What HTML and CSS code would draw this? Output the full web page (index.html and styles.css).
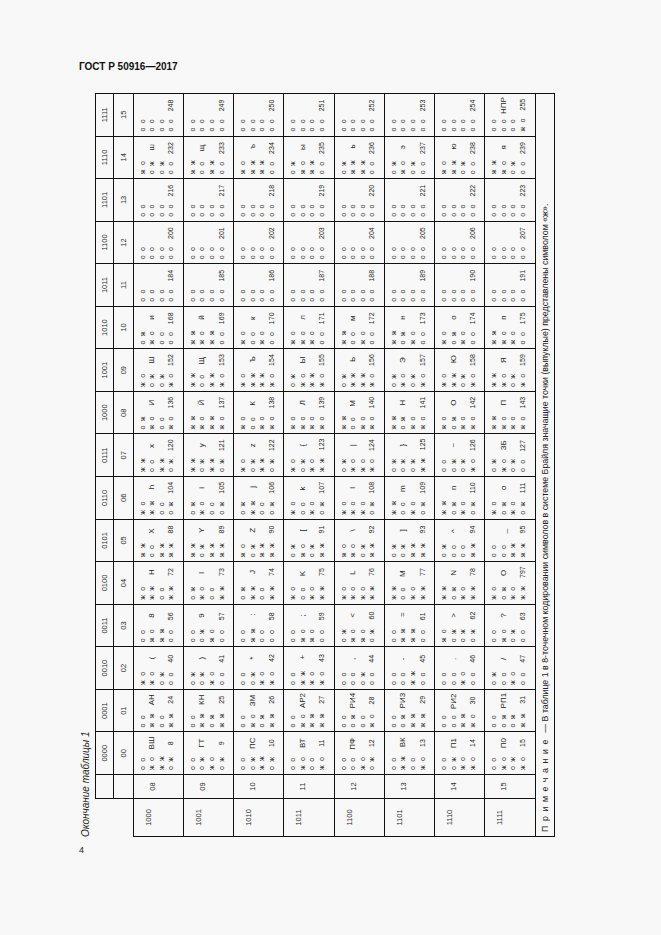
FILE: index.html
```html
<!DOCTYPE html>
<html lang="ru">
<head>
<meta charset="utf-8">
<title>ГОСТ Р 50916—2017</title>
<link rel="stylesheet" href="styles.css">
</head>
<body>
<div class="page">
<p class="doc-title">ГОСТ Р 50916—2017</p>
<div class="sheet">
<div class="turn">
<p class="caption">Окончание таблицы 1</p>
<table class="grid">
<colgroup><col class="w-a"><col class="w-b"><col class="w-c"><col class="w-c"><col class="w-c"><col class="w-c"><col class="w-c"><col class="w-c"><col class="w-c"><col class="w-c"><col class="w-c"><col class="w-c"><col class="w-c"><col class="w-c"><col class="w-c"><col class="w-c"><col class="w-c"><col class="w-c"></colgroup>
<tr class="h1"><td class="corner" rowspan="2"></td><td class="blank"></td><td>0000</td><td>0001</td><td>0010</td><td>0011</td><td>0100</td><td>0101</td><td>0110</td><td>0111</td><td>1000</td><td>1001</td><td>1010</td><td>1011</td><td>1100</td><td>1101</td><td>1110</td><td>1111</td></tr>
<tr class="h2"><td class="blank"></td><td>00</td><td>01</td><td>02</td><td>03</td><td>04</td><td>05</td><td>06</td><td>07</td><td>08</td><td>09</td><td>10</td><td>11</td><td>12</td><td>13</td><td>14</td><td>15</td></tr>

<tr class="row"><td class="lab-a">1000</td><td class="lab-b">08</td>
<td class="cell"><p>оо</p><p>жо<b>ВШ</b></p><p>жж</p><p>ож<b>8</b></p></td>
<td class="cell"><p>оо</p><p>жж<b>АН</b></p><p>оо</p><p>жж<b>24</b></p></td>
<td class="cell"><p>жо</p><p>жо<b>(</b></p><p>ож</p><p>оо<b>40</b></p></td>
<td class="cell"><p>оо</p><p>жо<b>8</b></p><p>жж</p><p>оо<b>56</b></p></td>
<td class="cell"><p>жо</p><p>жж<b>H</b></p><p>оо</p><p>жж<b>72</b></p></td>
<td class="cell"><p>жж</p><p>оо<b>X</b></p><p>жж</p><p>жж<b>88</b></p></td>
<td class="cell"><p>жо</p><p>жж<b>h</b></p><p>оо</p><p>ож<b>104</b></p></td>
<td class="cell"><p>жж</p><p>оо<b>x</b></p><p>жж</p><p>ож<b>120</b></p></td>
<td class="cell"><p>ож</p><p>жо<b>И</b></p><p>оо</p><p>жо<b>136</b></p></td>
<td class="cell"><p>жо</p><p>ож<b>Ш</b></p><p>ож</p><p>жо<b>152</b></p></td>
<td class="cell"><p>ож</p><p>жо<b>и</b></p><p>оо</p><p>оо<b>168</b></p></td>
<td class="cell"><p>оо</p><p>оо</p><p>оо</p><p>оо<b>184</b></p></td>
<td class="cell"><p>оо</p><p>оо</p><p>оо</p><p>оо<b>200</b></p></td>
<td class="cell"><p>оо</p><p>оо</p><p>оо</p><p>оо<b>216</b></p></td>
<td class="cell"><p>жо</p><p>ож<b>ш</b></p><p>ож</p><p>оо<b>232</b></p></td>
<td class="cell"><p>оо</p><p>оо</p><p>оо</p><p>оо<b>248</b></p></td>
</tr>

<tr class="row"><td class="lab-a">1001</td><td class="lab-b">09</td>
<td class="cell"><p>оо</p><p>ож<b>ГТ</b></p><p>жо</p><p>ож<b>9</b></p></td>
<td class="cell"><p>оо</p><p>жж<b>КН</b></p><p>ож</p><p>жж<b>25</b></p></td>
<td class="cell"><p>ож</p><p>ож<b>)</b></p><p>жо</p><p>оо<b>41</b></p></td>
<td class="cell"><p>оо</p><p>ож<b>9</b></p><p>жо</p><p>оо<b>57</b></p></td>
<td class="cell"><p>ож</p><p>жо<b>I</b></p><p>оо</p><p>жж<b>73</b></p></td>
<td class="cell"><p>жж</p><p>ож<b>Y</b></p><p>жж</p><p>жж<b>89</b></p></td>
<td class="cell"><p>ож</p><p>жо<b>i</b></p><p>оо</p><p>ож<b>105</b></p></td>
<td class="cell"><p>жж</p><p>ож<b>y</b></p><p>жж</p><p>ож<b>121</b></p></td>
<td class="cell"><p>жж</p><p>жо<b>Й</b></p><p>жж</p><p>жо<b>137</b></p></td>
<td class="cell"><p>жж</p><p>оо<b>Щ</b></p><p>жж</p><p>жо<b>153</b></p></td>
<td class="cell"><p>жж</p><p>жо<b>й</b></p><p>жж</p><p>оо<b>169</b></p></td>
<td class="cell"><p>оо</p><p>оо</p><p>оо</p><p>оо<b>185</b></p></td>
<td class="cell"><p>оо</p><p>оо</p><p>оо</p><p>оо<b>201</b></p></td>
<td class="cell"><p>оо</p><p>оо</p><p>оо</p><p>оо<b>217</b></p></td>
<td class="cell"><p>жж</p><p>оо<b>щ</b></p><p>жж</p><p>оо<b>233</b></p></td>
<td class="cell"><p>оо</p><p>оо</p><p>оо</p><p>оо<b>249</b></p></td>
</tr>

<tr class="row"><td class="lab-a">1010</td><td class="lab-b">10</td>
<td class="cell"><p>оо</p><p>ож<b>ПС</b></p><p>жж</p><p>ож<b>10</b></p></td>
<td class="cell"><p>оо</p><p>жо<b>ЗМ</b></p><p>ож</p><p>жж<b>26</b></p></td>
<td class="cell"><p>оо</p><p>ож<b>*</b></p><p>жо</p><p>жо<b>42</b></p></td>
<td class="cell"><p>оо</p><p>жж<b>:</b></p><p>оо</p><p>оо<b>58</b></p></td>
<td class="cell"><p>ож</p><p>жж<b>J</b></p><p>оо</p><p>жж<b>74</b></p></td>
<td class="cell"><p>жо</p><p>ож<b>Z</b></p><p>жж</p><p>жж<b>90</b></p></td>
<td class="cell"><p>ож</p><p>жж<b>j</b></p><p>оо</p><p>ож<b>106</b></p></td>
<td class="cell"><p>жо</p><p>ож<b>z</b></p><p>жж</p><p>ож<b>122</b></p></td>
<td class="cell"><p>жо</p><p>оо<b>К</b></p><p>жо</p><p>жо<b>138</b></p></td>
<td class="cell"><p>жо</p><p>жж<b>Ъ</b></p><p>жж</p><p>жо<b>154</b></p></td>
<td class="cell"><p>жо</p><p>оо<b>к</b></p><p>жо</p><p>оо<b>170</b></p></td>
<td class="cell"><p>оо</p><p>оо</p><p>оо</p><p>оо<b>186</b></p></td>
<td class="cell"><p>оо</p><p>оо</p><p>оо</p><p>оо<b>202</b></p></td>
<td class="cell"><p>оо</p><p>оо</p><p>оо</p><p>оо<b>218</b></p></td>
<td class="cell"><p>жо</p><p>жж<b>ъ</b></p><p>жж</p><p>оо<b>234</b></p></td>
<td class="cell"><p>оо</p><p>оо</p><p>оо</p><p>оо<b>250</b></p></td>
</tr>

<tr class="row"><td class="lab-a">1011</td><td class="lab-b">11</td>
<td class="cell"><p>оо</p><p>жо<b>ВТ</b></p><p>оо</p><p>жо<b>11</b></p></td>
<td class="cell"><p>оо</p><p>жо<b>АР2</b></p><p>жж</p><p>жж<b>27</b></p></td>
<td class="cell"><p>оо</p><p>жж<b>+</b></p><p>жо</p><p>жо<b>43</b></p></td>
<td class="cell"><p>оо</p><p>жо<b>;</b></p><p>жо</p><p>оо<b>59</b></p></td>
<td class="cell"><p>жо</p><p>оо<b>K</b></p><p>жо</p><p>жж<b>75</b></p></td>
<td class="cell"><p>ож</p><p>жо<b>[</b></p><p>ож</p><p>жж<b>91</b></p></td>
<td class="cell"><p>жо</p><p>оо<b>k</b></p><p>жо</p><p>ож<b>107</b></p></td>
<td class="cell"><p>жо</p><p>ож<b>{</b></p><p>жо</p><p>жж<b>123</b></p></td>
<td class="cell"><p>жо</p><p>жо<b>Л</b></p><p>жо</p><p>жо<b>139</b></p></td>
<td class="cell"><p>ож</p><p>жо<b>Ы</b></p><p>жж</p><p>жо<b>155</b></p></td>
<td class="cell"><p>жо</p><p>жо<b>л</b></p><p>жо</p><p>оо<b>171</b></p></td>
<td class="cell"><p>оо</p><p>оо</p><p>оо</p><p>оо<b>187</b></p></td>
<td class="cell"><p>оо</p><p>оо</p><p>оо</p><p>оо<b>203</b></p></td>
<td class="cell"><p>оо</p><p>оо</p><p>оо</p><p>оо<b>219</b></p></td>
<td class="cell"><p>ож</p><p>жо<b>ы</b></p><p>жж</p><p>оо<b>235</b></p></td>
<td class="cell"><p>оо</p><p>оо</p><p>оо</p><p>оо<b>251</b></p></td>
</tr>

<tr class="row"><td class="lab-a">1100</td><td class="lab-b">12</td>
<td class="cell"><p>оо</p><p>оо<b>ПФ</b></p><p>жо</p><p>ож<b>12</b></p></td>
<td class="cell"><p>оо</p><p>ож<b>РИ4</b></p><p>оо</p><p>жо<b>28</b></p></td>
<td class="cell"><p>оо</p><p>оо<b>,</b></p><p>ож</p><p>оо<b>44</b></p></td>
<td class="cell"><p>ож</p><p>жо<b>&lt;</b></p><p>жо</p><p>ож<b>60</b></p></td>
<td class="cell"><p>жо</p><p>жо<b>L</b></p><p>жо</p><p>жж<b>76</b></p></td>
<td class="cell"><p>жо</p><p>жо<b>\</b></p><p>ож</p><p>жж<b>92</b></p></td>
<td class="cell"><p>жо</p><p>жо<b>l</b></p><p>жо</p><p>ож<b>108</b></p></td>
<td class="cell"><p>ож</p><p>жо<b>|</b></p><p>жо</p><p>жо<b>124</b></p></td>
<td class="cell"><p>жж</p><p>оо<b>М</b></p><p>жо</p><p>жо<b>140</b></p></td>
<td class="cell"><p>ож</p><p>жж<b>Ь</b></p><p>жж</p><p>жо<b>156</b></p></td>
<td class="cell"><p>жж</p><p>оо<b>м</b></p><p>жо</p><p>оо<b>172</b></p></td>
<td class="cell"><p>оо</p><p>оо</p><p>оо</p><p>оо<b>188</b></p></td>
<td class="cell"><p>оо</p><p>оо</p><p>оо</p><p>оо<b>204</b></p></td>
<td class="cell"><p>оо</p><p>оо</p><p>оо</p><p>оо<b>220</b></p></td>
<td class="cell"><p>ож</p><p>жж<b>ь</b></p><p>жж</p><p>оо<b>236</b></p></td>
<td class="cell"><p>оо</p><p>оо</p><p>оо</p><p>оо<b>252</b></p></td>
</tr>

<tr class="row"><td class="lab-a">1101</td><td class="lab-b">13</td>
<td class="cell"><p>оо</p><p>жж<b>ВК</b></p><p>оо</p><p>жо<b>13</b></p></td>
<td class="cell"><p>оо</p><p>ож<b>РИ3</b></p><p>жж</p><p>жж<b>29</b></p></td>
<td class="cell"><p>оо</p><p>оо<b>-</b></p><p>жж</p><p>оо<b>45</b></p></td>
<td class="cell"><p>оо</p><p>жж<b>=</b></p><p>жж</p><p>оо<b>61</b></p></td>
<td class="cell"><p>жж</p><p>оо<b>M</b></p><p>жо</p><p>жж<b>77</b></p></td>
<td class="cell"><p>ож</p><p>ож<b>]</b></p><p>жж</p><p>жж<b>93</b></p></td>
<td class="cell"><p>жж</p><p>оо<b>m</b></p><p>жо</p><p>ож<b>109</b></p></td>
<td class="cell"><p>ож</p><p>ож<b>}</b></p><p>ож</p><p>жж<b>125</b></p></td>
<td class="cell"><p>жж</p><p>ож<b>Н</b></p><p>жо</p><p>жо<b>141</b></p></td>
<td class="cell"><p>ож</p><p>жо<b>Э</b></p><p>ож</p><p>жо<b>157</b></p></td>
<td class="cell"><p>жж</p><p>ож<b>н</b></p><p>жо</p><p>оо<b>173</b></p></td>
<td class="cell"><p>оо</p><p>оо</p><p>оо</p><p>оо<b>189</b></p></td>
<td class="cell"><p>оо</p><p>оо</p><p>оо</p><p>оо<b>205</b></p></td>
<td class="cell"><p>оо</p><p>оо</p><p>оо</p><p>оо<b>221</b></p></td>
<td class="cell"><p>ож</p><p>жо<b>э</b></p><p>ож</p><p>оо<b>237</b></p></td>
<td class="cell"><p>оо</p><p>оо</p><p>оо</p><p>оо<b>253</b></p></td>
</tr>

<tr class="row"><td class="lab-a">1110</td><td class="lab-b">14</td>
<td class="cell"><p>оо</p><p>ож<b>П1</b></p><p>жо</p><p>жо<b>14</b></p></td>
<td class="cell"><p>оо</p><p>оо<b>РИ2</b></p><p>жж</p><p>жо<b>30</b></p></td>
<td class="cell"><p>оо</p><p>оо<b>.</b></p><p>жо</p><p>оо<b>46</b></p></td>
<td class="cell"><p>жо</p><p>ож<b>&gt;</b></p><p>ож</p><p>ож<b>62</b></p></td>
<td class="cell"><p>жж</p><p>ож<b>N</b></p><p>жо</p><p>жж<b>78</b></p></td>
<td class="cell"><p>ож</p><p>оо<b>^</b></p><p>оо</p><p>жж<b>94</b></p></td>
<td class="cell"><p>жж</p><p>ож<b>n</b></p><p>жо</p><p>ож<b>110</b></p></td>
<td class="cell"><p>оо</p><p>ож<b>~</b></p><p>ож</p><p>жо<b>126</b></p></td>
<td class="cell"><p>жо</p><p>ож<b>О</b></p><p>жо</p><p>жо<b>142</b></p></td>
<td class="cell"><p>жо</p><p>жж<b>Ю</b></p><p>ож</p><p>жо<b>158</b></p></td>
<td class="cell"><p>жо</p><p>ож<b>о</b></p><p>жо</p><p>оо<b>174</b></p></td>
<td class="cell"><p>оо</p><p>оо</p><p>оо</p><p>оо<b>190</b></p></td>
<td class="cell"><p>оо</p><p>оо</p><p>оо</p><p>оо<b>206</b></p></td>
<td class="cell"><p>оо</p><p>оо</p><p>оо</p><p>оо<b>222</b></p></td>
<td class="cell"><p>жо</p><p>жж<b>ю</b></p><p>ож</p><p>оо<b>238</b></p></td>
<td class="cell"><p>оо</p><p>оо</p><p>оо</p><p>оо<b>254</b></p></td>
</tr>

<tr class="row"><td class="lab-a">1111</td><td class="lab-b">15</td>
<td class="cell"><p>оо</p><p>жо<b>П0</b></p><p>ож</p><p>жо<b>15</b></p></td>
<td class="cell"><p>оо</p><p>ож<b>РП1</b></p><p>ож</p><p>жж<b>31</b></p></td>
<td class="cell"><p>ож</p><p>оо<b>/</b></p><p>жо</p><p>оо<b>47</b></p></td>
<td class="cell"><p>оо</p><p>жо<b>?</b></p><p>ож</p><p>оо<b>63</b></p></td>
<td class="cell"><p>жо</p><p>ож<b>O</b></p><p>жо</p><p>жж<b>797</b></p></td>
<td class="cell"><p>оо</p><p>оо<b>_</b></p><p>жж</p><p>жж<b>95</b></p></td>
<td class="cell"><p>жо</p><p>ож<b>o</b></p><p>жо</p><p>ож<b>111</b></p></td>
<td class="cell"><p>ож</p><p>жо<b>ЗБ</b></p><p>ож</p><p>оо<b>127</b></p></td>
<td class="cell"><p>жж</p><p>жо<b>П</b></p><p>жо</p><p>жо<b>143</b></p></td>
<td class="cell"><p>жж</p><p>жо<b>Я</b></p><p>ож</p><p>жо<b>159</b></p></td>
<td class="cell"><p>жж</p><p>жо<b>п</b></p><p>жо</p><p>оо<b>175</b></p></td>
<td class="cell"><p>оо</p><p>оо</p><p>оо</p><p>оо<b>191</b></p></td>
<td class="cell"><p>оо</p><p>оо</p><p>оо</p><p>оо<b>207</b></p></td>
<td class="cell"><p>оо</p><p>оо</p><p>оо</p><p>оо<b>223</b></p></td>
<td class="cell"><p>жж</p><p>жо<b>я</b></p><p>ож</p><p>оо<b>239</b></p></td>
<td class="cell"><p>оо</p><p>оо<b>НПР</b></p><p>оо</p><p>жо<b>255</b></p></td>
</tr>

<tr class="note"><td colspan="18"><span class="note-head">Примечание</span> — В таблице 1 в 8-точечном кодировании символов в системе Брайля значащие точки (выпуклые) представлены символом «ж».</td></tr>
</table>
</div>
</div>
<p class="page-num">4</p>
</div>
</body>
</html>
```

FILE: styles.css
```css
html, body {
  margin: 0;
  padding: 0;
}

body {
  background: #f8f8f8;
  color: #1c1c1c;
  font-family: "Liberation Sans", Arial, sans-serif;
}

.page {
  padding: 61px 0 0 79px;
}

.doc-title {
  margin: 0;
  font-size: 10px;
  line-height: 12px;
  font-weight: bold;
  color: #111;
}

/* the rotated sheet reserves its turned footprint in the flow */
.sheet {
  width: 474px;
  height: 743px;
  margin: 21.3px 0 0 1px;
}

.turn {
  width: 743px;
  transform-origin: 0 0;
  transform: rotate(-90deg) translateX(-100%);
}

.caption {
  margin: 0 0 2.5px;
  font-size: 10px;
  line-height: 12px;
  font-style: italic;
  color: #222;
}

.grid {
  width: 743px;
  border-collapse: collapse;
  table-layout: fixed;
}

.w-a { width: 38px; }
.w-b { width: 24px; }
.w-c { width: 42.5625px; }

.grid td {
  box-sizing: border-box;
  border: 1px solid #111;
  padding: 0;
  font-size: 7.5px;
  line-height: 9px;
  color: #2a2a2a;
}

.h1 td {
  height: 18px;
  text-align: center;
  vertical-align: middle;
}

.h2 td {
  height: 20px;
  text-align: center;
  vertical-align: middle;
}

.grid td.corner {
  border-top: none;
  border-left: none;
}

.row td {
  height: 50.25px;
  vertical-align: top;
}

.grid .lab-a {
  text-align: center;
  padding-top: 10px;
}

.grid .lab-b {
  text-align: center;
  padding-top: 14px;
}

.grid .cell {
  padding-top: 4px;
}

.cell p {
  margin: 0;
  height: 9.6px;
  padding-left: 4px;
  white-space: nowrap;
  font-family: "Liberation Sans", Arial, sans-serif;
  font-size: 7px;
  line-height: 9.6px;
  letter-spacing: 4.4px;
  color: #333;
}

.cell b {
  display: inline-block;
  width: 19px;
  vertical-align: top;
  text-align: center;
  letter-spacing: 0;
  font-weight: normal;
  font-size: 7px;
  line-height: 9.6px;
  color: #1c1c1c;
}

.cell p:nth-child(2) b {
  font-size: 8px;
}

.note td {
  height: 19px;
  padding-left: 4px;
  vertical-align: middle;
  white-space: nowrap;
  font-size: 8.8px;
  line-height: 10px;
  color: #222;
}

.note-head {
  letter-spacing: 4.6px;
}

.page-num {
  margin: 7.5px 0 0;
  font-size: 9px;
  line-height: 11px;
  color: #222;
}
```
